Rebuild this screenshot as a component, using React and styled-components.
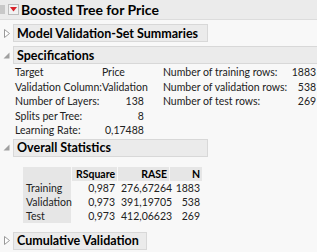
import React from "react";
import styled, { createGlobalStyle } from "styled-components";

const GlobalStyle = createGlobalStyle`
  html, body {
    margin: 0;
    padding: 0;
    background: #f8f8f8;
  }
  body {
    font-family: "Lato", "Open Sans", sans-serif;
    font-size: 10.5px;
    color: #222;
    width: 317px;
    height: 252px;
    overflow: hidden;
  }
`;

const Page = styled.div`
  display: flex;
  flex-direction: column;
  width: 317px;
`;

const TopRow = styled.div`
  display: flex;
  align-items: center;
  height: 19px;
  background: #ebebeb;
  border-bottom: 1px solid #dcdcdc;
`;

const FrameTab = styled.div`
  width: 5px;
  height: 9px;
  background: #c8c8c8;
  margin-right: 3px;
`;

const RedButton = styled.div`
  width: 9px;
  height: 9px;
  border: 1px solid #bdbdbd;
  background: #f2f2f2;
  display: flex;
  align-items: center;
  justify-content: center;
  margin-right: 2px;
`;

const Title = styled.div`
  font-weight: 700;
  font-size: 14px;
  color: #000;
`;

const Body = styled.div`
  display: flex;
  flex-direction: column;
  padding-top: 4px;
`;

const SectionHead = styled.div`
  display: flex;
  align-items: center;
  height: 18px;
  margin-bottom: ${(p) => p.$gap || 0}px;
`;

const Toggle = styled.div`
  width: 13px;
  display: flex;
  justify-content: center;
  align-items: center;
`;

const HeadBox = styled.div`
  box-sizing: border-box;
  height: 18px;
  width: ${(p) => (p.$full ? "auto" : `${p.$w}px`)};
  flex: ${(p) => (p.$full ? 1 : "none")};
  background: #ebebeb;
  border: 1px solid #d8d8d8;
  ${(p) => p.$full && "border-right: none;"}
  padding-left: 3px;
  display: flex;
  align-items: center;
  font-weight: 700;
  font-size: 12.5px;
  color: #000;
  white-space: nowrap;
`;

const SpecArea = styled.div`
  display: flex;
  padding: 1px 0 0 15px;
  gap: 16px;
  margin-bottom: 1px;
`;

const SpecGrid = styled.div`
  display: grid;
  flex: ${(p) => (p.$grow ? 1 : "none")};
  grid-template-columns: ${(p) => p.$cols};
  grid-auto-rows: 14.5px;
  align-items: center;
  white-space: nowrap;
`;

const Cell = styled.div`
  text-align: ${(p) => p.$align || "left"};
  padding-right: ${(p) => p.$pad || 0}px;
`;

const StatsTable = styled.table`
  margin: 10px 0 9px 22px;
  border-collapse: separate;
  border-spacing: 1px 0;
  table-layout: fixed;
  width: 181px;
  font-size: 10.5px;
  td, th {
    box-sizing: border-box;
    padding: 0 2px 0 3px;
    height: 14px;
    line-height: 14px;
    white-space: nowrap;
  }
`;

const Col = styled.col`
  width: ${(p) => p.$w}px;
`;

const Th = styled.th`
  background: #e6e6e6;
  font-weight: 700;
  text-align: right;
  color: #000;
`;

const RowLabel = styled.td`
  background: #e6e6e6;
  text-align: left;
`;

const Num = styled.td`
  text-align: right;
`;

function OpenIcon() {
  return (
    <svg width="7" height="7" viewBox="0 0 7 7">
      <path d="M6.5 0.5 L6.5 6.5 L0.5 6.5 Z" fill="#a0a0a0" />
    </svg>
  );
}

function ClosedIcon() {
  return (
    <svg width="6" height="9" viewBox="0 0 6 9">
      <path d="M0.5 0.5 L5.5 4.5 L0.5 8.5 Z" fill="#fff" stroke="#999" strokeWidth="1" />
    </svg>
  );
}

function RedTriangle() {
  return (
    <svg width="7" height="5" viewBox="0 0 7 5">
      <path d="M0 0 L7 0 L3.5 4.5 Z" fill="#d8232a" />
    </svg>
  );
}

const specLeft = [
  ["Target", "Price", "left"],
  ["Validation Column:", "Validation", "left"],
  ["Number of Layers:", "138", "right"],
  ["Splits per Tree:", "8", "right"],
  ["Learning Rate:", "0,17488", "right"],
];

const specRight = [
  ["Number of training rows:", "1883"],
  ["Number of validation rows:", "538"],
  ["Number of test rows:", "269"],
];

const stats = [
  ["Training", "0,987", "276,67264", "1883"],
  ["Validation", "0,973", "391,19705", "538"],
  ["Test", "0,973", "412,06623", "269"],
];

export default function App() {
  return (
    <Page>
      <GlobalStyle />
      <TopRow>
        <FrameTab />
        <RedButton>
          <RedTriangle />
        </RedButton>
        <Title>Boosted Tree for Price</Title>
      </TopRow>
      <Body>
        <SectionHead $gap={4}>
          <Toggle><ClosedIcon /></Toggle>
          <HeadBox $w={195}>Model Validation-Set Summaries</HeadBox>
        </SectionHead>

        <SectionHead>
          <Toggle><OpenIcon /></Toggle>
          <HeadBox $full>Specifications</HeadBox>
        </SectionHead>
        <SpecArea>
          <SpecGrid $cols="max-content 45px">
            {specLeft.map(([k, v, a]) => (
              <React.Fragment key={k}>
                <Cell>{k}</Cell>
                <Cell $align={a} $pad={a === "right" ? 3 : 0}>{v}</Cell>
              </React.Fragment>
            ))}
          </SpecGrid>
          <SpecGrid $grow $cols="1fr 30px">
            {specRight.map(([k, v]) => (
              <React.Fragment key={k}>
                <Cell>{k}</Cell>
                <Cell $align="right" $pad={1}>{v}</Cell>
              </React.Fragment>
            ))}
          </SpecGrid>
        </SpecArea>

        <SectionHead>
          <Toggle><OpenIcon /></Toggle>
          <HeadBox $w={195}>Overall Statistics</HeadBox>
        </SectionHead>
        <StatsTable>
          <colgroup>
            <Col $w={48} />
            <Col $w={45} />
            <Col $w={51} />
            <Col $w={32} />
          </colgroup>
          <thead>
            <tr>
              <Th></Th>
              <Th>RSquare</Th>
              <Th>RASE</Th>
              <Th>N</Th>
            </tr>
          </thead>
          <tbody>
            {stats.map((r) => (
              <tr key={r[0]}>
                <RowLabel>{r[0]}</RowLabel>
                <Num>{r[1]}</Num>
                <Num>{r[2]}</Num>
                <Num>{r[3]}</Num>
              </tr>
            ))}
          </tbody>
        </StatsTable>

        <SectionHead>
          <Toggle><ClosedIcon /></Toggle>
          <HeadBox $w={134}>Cumulative Validation</HeadBox>
        </SectionHead>
      </Body>
    </Page>
  );
}
